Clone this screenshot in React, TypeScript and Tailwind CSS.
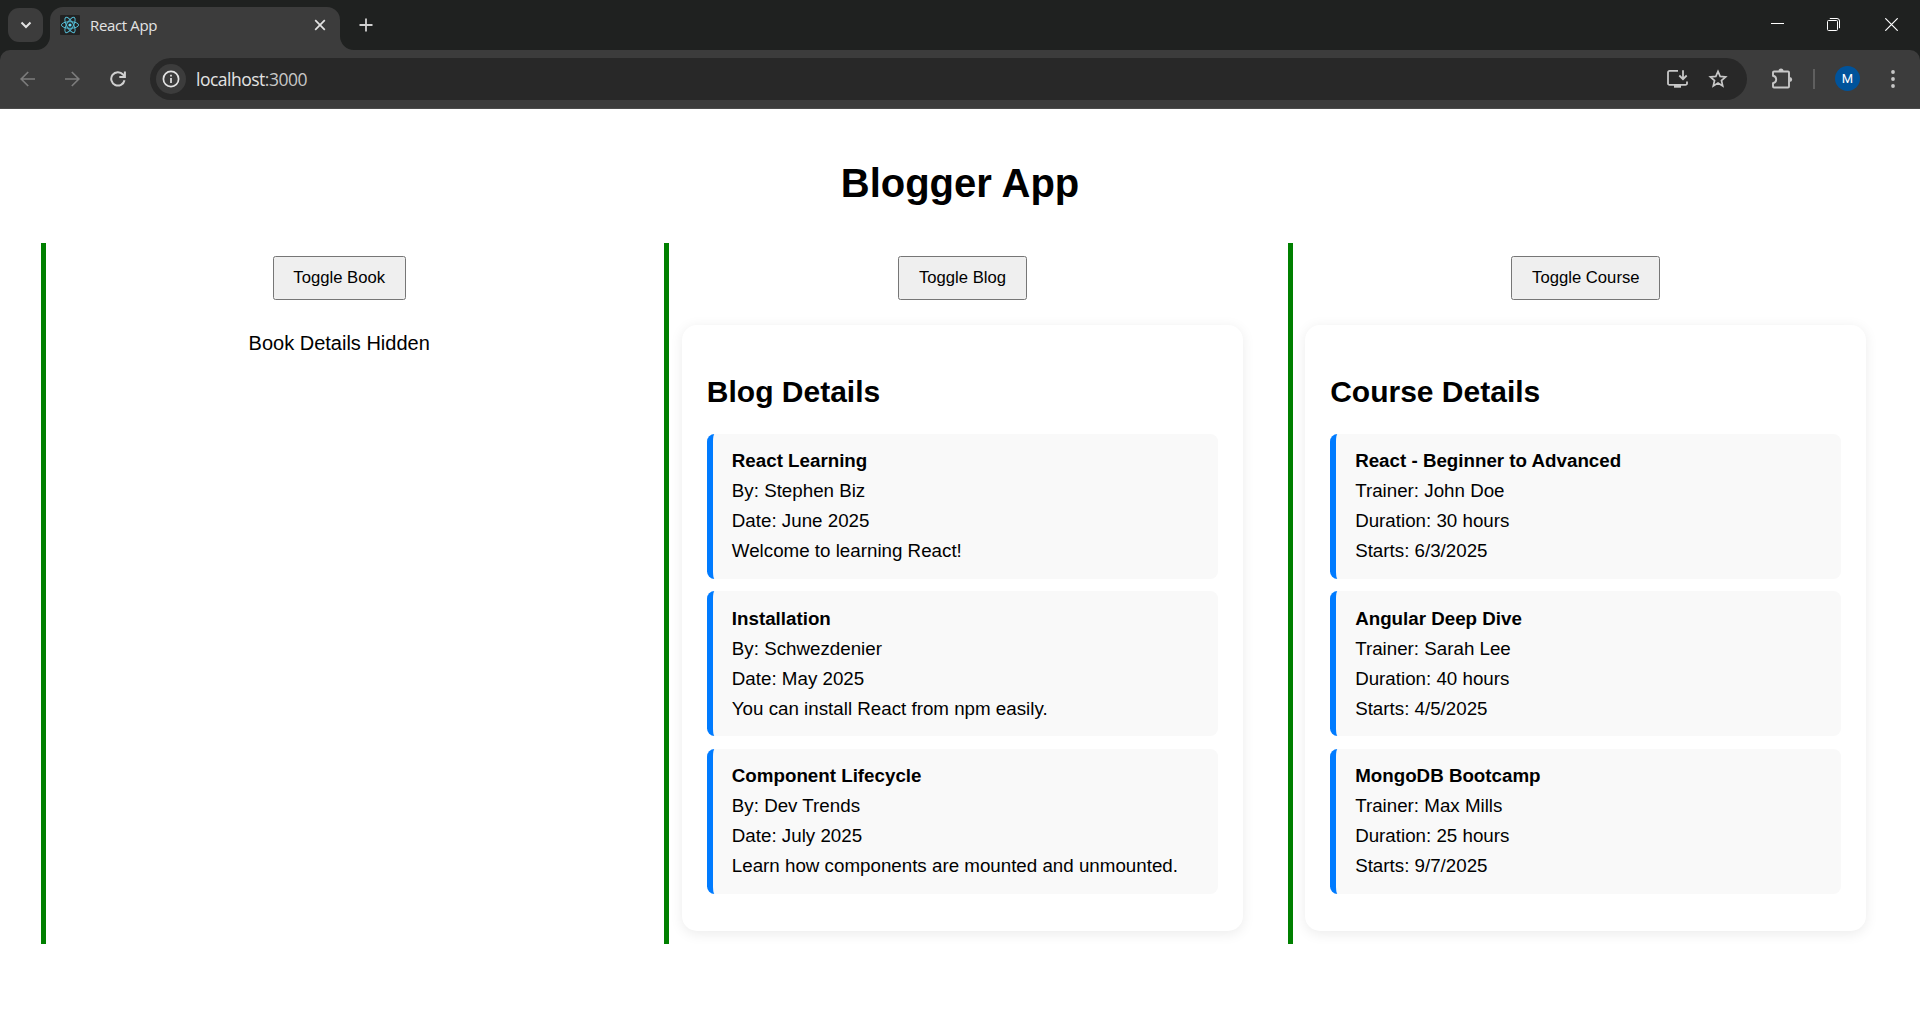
import { useState } from "react";

type Entry = { title: string; lines: string[] };

const blogs: Entry[] = [
  { title: "React Learning", lines: ["By: Stephen Biz", "Date: June 2025", "Welcome to learning React!"] },
  { title: "Installation", lines: ["By: Schwezdenier", "Date: May 2025", "You can install React from npm easily."] },
  { title: "Component Lifecycle", lines: ["By: Dev Trends", "Date: July 2025", "Learn how components are mounted and unmounted."] },
];

const courses: Entry[] = [
  { title: "React - Beginner to Advanced", lines: ["Trainer: John Doe", "Duration: 30 hours", "Starts: 6/3/2025"] },
  { title: "Angular Deep Dive", lines: ["Trainer: Sarah Lee", "Duration: 40 hours", "Starts: 4/5/2025"] },
  { title: "MongoDB Bootcamp", lines: ["Trainer: Max Mills", "Duration: 25 hours", "Starts: 9/7/2025"] },
];

function ReactLogo() {
  return (
    <svg viewBox="0 0 20 20" className="size-5 rounded-[1px] bg-[#222222]" fill="none" stroke="#53b9d1" strokeWidth="1">
      <ellipse cx="10" cy="10" rx="8.6" ry="3.3" />
      <ellipse cx="10" cy="10" rx="8.6" ry="3.3" transform="rotate(60 10 10)" />
      <ellipse cx="10" cy="10" rx="8.6" ry="3.3" transform="rotate(120 10 10)" />
      <circle cx="10" cy="10" r="1.6" fill="#61dafb" stroke="none" />
    </svg>
  );
}

function TabStrip() {
  return (
    <div className="flex h-[50px] bg-[#1f2120] pl-2 pt-2">
      <button className="flex h-[34px] w-[35px] items-center justify-center rounded-[11px] bg-[#3c3c3c]">
        <svg viewBox="0 0 12 12" className="size-3" fill="none" stroke="#e3e3e3" strokeWidth="2">
          <path d="M1.500 3.500 6 8l4.500-4.500" />
        </svg>
      </button>
      <svg viewBox="0 0 14 14" className="-ml-[7px] size-[14px] self-end" fill="#3c3c3c">
        <path d="M14 0v14H0A14 14 0 0 0 14 0Z" />
      </svg>
      <div className="-mt-px flex w-[290px] rounded-t-[13px] bg-[#3c3c3c] pb-[7px] pl-[10px]">
        <div className="flex flex-1 items-center">
          <ReactLogo />
          <span className="ml-[10px] whitespace-nowrap font-['Open_Sans',sans-serif] text-[15px] leading-5 tracking-[-0.35px] text-[#e3e3e3]">React App</span>
          <svg viewBox="0 0 12 12" className="ml-auto mr-[14px] size-3" fill="none" stroke="#e3e3e3" strokeWidth="1.700">
            <path d="m1.200 1.200 9.600 9.600m0-9.600-9.600 9.600" />
          </svg>
        </div>
      </div>
      <svg viewBox="0 0 14 14" className="size-[14px] self-end" fill="#3c3c3c">
        <path d="M0 0v14h14A14 14 0 0 1 0 0Z" />
      </svg>
      <svg viewBox="0 0 14 14" className="ml-[4.5px] mt-[10px] size-[14px]" fill="none" stroke="#d0d0d0" strokeWidth="1.800">
        <path d="M7 .5v13M.5 7h13" />
      </svg>
      <div className="ml-auto flex text-white">
        <svg viewBox="0 0 13 13" className="mr-[43px] mt-[9px] size-[13px]" fill="none" stroke="currentColor">
          <path d="M0 6.500h13" />
        </svg>
        <svg viewBox="0 0 13 13" className="mr-[45px] mt-[10px] size-[13px]" fill="none" stroke="currentColor">
          <rect x=".5" y="2.500" width="10" height="10" rx="1" />
          <path d="M2.800.500H10a2.500 2.500 0 0 1 2.500 2.500v7.200" />
        </svg>
        <svg viewBox="0 0 13 13" className="mr-[22px] mt-[10px] size-[13px]" fill="none" stroke="currentColor" strokeWidth="1.200">
          <path d="m.3.3 12.400 12.400m0-12.400L.3 12.700" />
        </svg>
      </div>
    </div>
  );
}

function Toolbar() {
  return (
    <div className="bg-[#1f2120]">
      <div className="flex h-[59px] items-center rounded-t-[10px] border-b border-[#4b4b4b] bg-[#3c3c3c] pb-px pl-5">
        <svg viewBox="0 0 16 16" className="size-4" fill="none" stroke="#7c7c7c" strokeWidth="1.700">
          <path d="M15 8H1.500M8.200 1 1.200 8l7 7" />
        </svg>
        <svg viewBox="0 0 16 16" className="ml-7 size-4" fill="none" stroke="#7c7c7c" strokeWidth="1.700">
          <path d="M1 8h13.500M7.800 1l7 7-7 7" />
        </svg>
        <svg viewBox="0 0 16 16" className="ml-[29.5px] size-4" fill="none" stroke="#d0d0d0" strokeWidth="2">
          <path d="M14.500 9.200A6.700 6.700 0 1 1 13 3.500l1.500 1.900" />
          <path d="M14.900.5v5.600H9.300" />
        </svg>
        <div className="ml-[24.5px] flex h-[42px] w-[1597px] items-center rounded-full bg-[#282828] pl-[6px] pr-[19.500px]">
          <span className="flex size-[30px] items-center justify-center rounded-full bg-[#3c3c3c]">
            <svg viewBox="0 0 18 18" className="size-[18px]" fill="none" stroke="#e3e3e3" strokeWidth="1.700">
              <circle cx="9" cy="9" r="7.600" />
              <path d="M9 8v5M9 4.800v1.800" />
            </svg>
          </span>
          <span className="ml-[10px] pt-[2px] font-['Open_Sans',sans-serif] text-[17.500px] tracking-[-0.5px] text-[#e3e3e3]">
            localhost<span className="text-[#c7c7c7]">:3000</span>
          </span>
          <svg viewBox="0 0 21 19" className="ml-auto h-[19px] w-[21px]" fill="none" stroke="#c7c7c7" strokeWidth="1.800">
            <path d="M11 1.900H2.500a1.500 1.500 0 0 0-1.500 1.500v11a1.500 1.500 0 0 0 1.500 1.500h16a1.500 1.500 0 0 0 1.500-1.500v-2" />
            <path d="M16 1.200v9M12.300 6.500l3.700 3.700 3.700-3.700" />
            <path d="M7 17.300h7" strokeWidth="2.800" />
          </svg>
          <svg viewBox="0 0 20 20" className="ml-[19.500px] mt-px size-5" fill="none" stroke="#c7c7c7" strokeWidth="1.700">
            <path d="m10 2.400 2.150 5.050 5.450.48-4.130 3.600 1.240 5.350L10 14.040l-4.710 2.840 1.240-5.350L2.400 7.930l5.450-.48Z" />
          </svg>
        </div>
        <svg viewBox="0 0 22 22" className="ml-[24px] size-[22px]" fill="none" stroke="#c7c7c7" strokeWidth="1.900">
          <path d="M3 3.500h14a1 1 0 0 1 1 1v14a1 1 0 0 1-1 1H3a1 1 0 0 1-1-1v-3.300c2.200-.5 3.200-1.800 3.200-3.700S4.200 8.300 2 7.800V4.500a1 1 0 0 1 1-1Z" />
          <path d="M7.500 3a2.500 2.500 0 0 1 5 0ZM18.700 9a2.500 2.500 0 0 1 0 5Z" fill="#c7c7c7" stroke="none" />
        </svg>
        <span className="ml-5 h-5 w-[2px] bg-[#5f5f5f]" />
        <span className="ml-5 flex size-[25px] items-center justify-center rounded-full bg-[#00539b] font-[Roboto,sans-serif] text-[13px] text-white">M</span>
        <svg viewBox="0 0 4 18" className="ml-[30.500px] h-[18px] w-1" fill="#c7c7c7">
          <circle cx="2" cy="2" r="1.900" />
          <circle cx="2" cy="9" r="1.900" />
          <circle cx="2" cy="16" r="1.900" />
        </svg>
      </div>
    </div>
  );
}

function Details({ heading, entries }: { heading: string; entries: Entry[] }) {
  return (
    <section className="mt-[25px] rounded-[15px] bg-white px-[25px] pb-[37.5px] pt-[50px] shadow-[0_2.5px_12.5px_rgba(0,0,0,0.08)]">
      <h2 className="text-[30px] font-bold leading-[34px]">{heading}</h2>
      <ul className="mt-[25px] flex flex-col gap-[12.5px]">
        {entries.map((entry) => (
          <li key={entry.title} className="rounded-[7.5px] border-l-[6px] border-[#007bff] bg-[#f9f9f9] px-[19px] py-[12.5px] text-[18.75px] leading-[30px]">
            <strong className="block font-bold">{entry.title}</strong>
            {entry.lines.map((line) => (
              <p key={line}>{line}</p>
            ))}
          </li>
        ))}
      </ul>
    </section>
  );
}

function Column({ name, entries, initiallyOpen }: { name: string; entries: Entry[]; initiallyOpen: boolean }) {
  const [open, setOpen] = useState(initiallyOpen);
  return (
    <div className="border-l-[5px] border-[#008000] p-[12.5px]">
      <button
        onClick={() => setOpen(!open)}
        className="mx-auto block h-11 rounded-[2.5px] border border-[#767676] bg-[#efefef] px-[19.75px] text-[16.67px] leading-[19px]"
      >
        Toggle {name}
      </button>
      {open ? (
        <Details heading={`${name} Details`} entries={entries} />
      ) : (
        <p className="mt-8 text-center text-[20px] leading-[23px]">{name} Details Hidden</p>
      )}
    </div>
  );
}

export default function App() {
  return (
    <div className="h-[1020px] overflow-hidden bg-white text-black">
      <TabStrip />
      <Toolbar />
      <main className="px-[41px] font-['Liberation_Sans',Arial,sans-serif]">
        <h1 className="pt-[51px] text-center text-[40px] font-bold leading-[46px]">Blogger App</h1>
        <div className="mt-[37px] grid grid-cols-3 gap-8">
          <Column name="Book" entries={[]} initiallyOpen={false} />
          <Column name="Blog" entries={blogs} initiallyOpen />
          <Column name="Course" entries={courses} initiallyOpen />
        </div>
      </main>
    </div>
  );
}
